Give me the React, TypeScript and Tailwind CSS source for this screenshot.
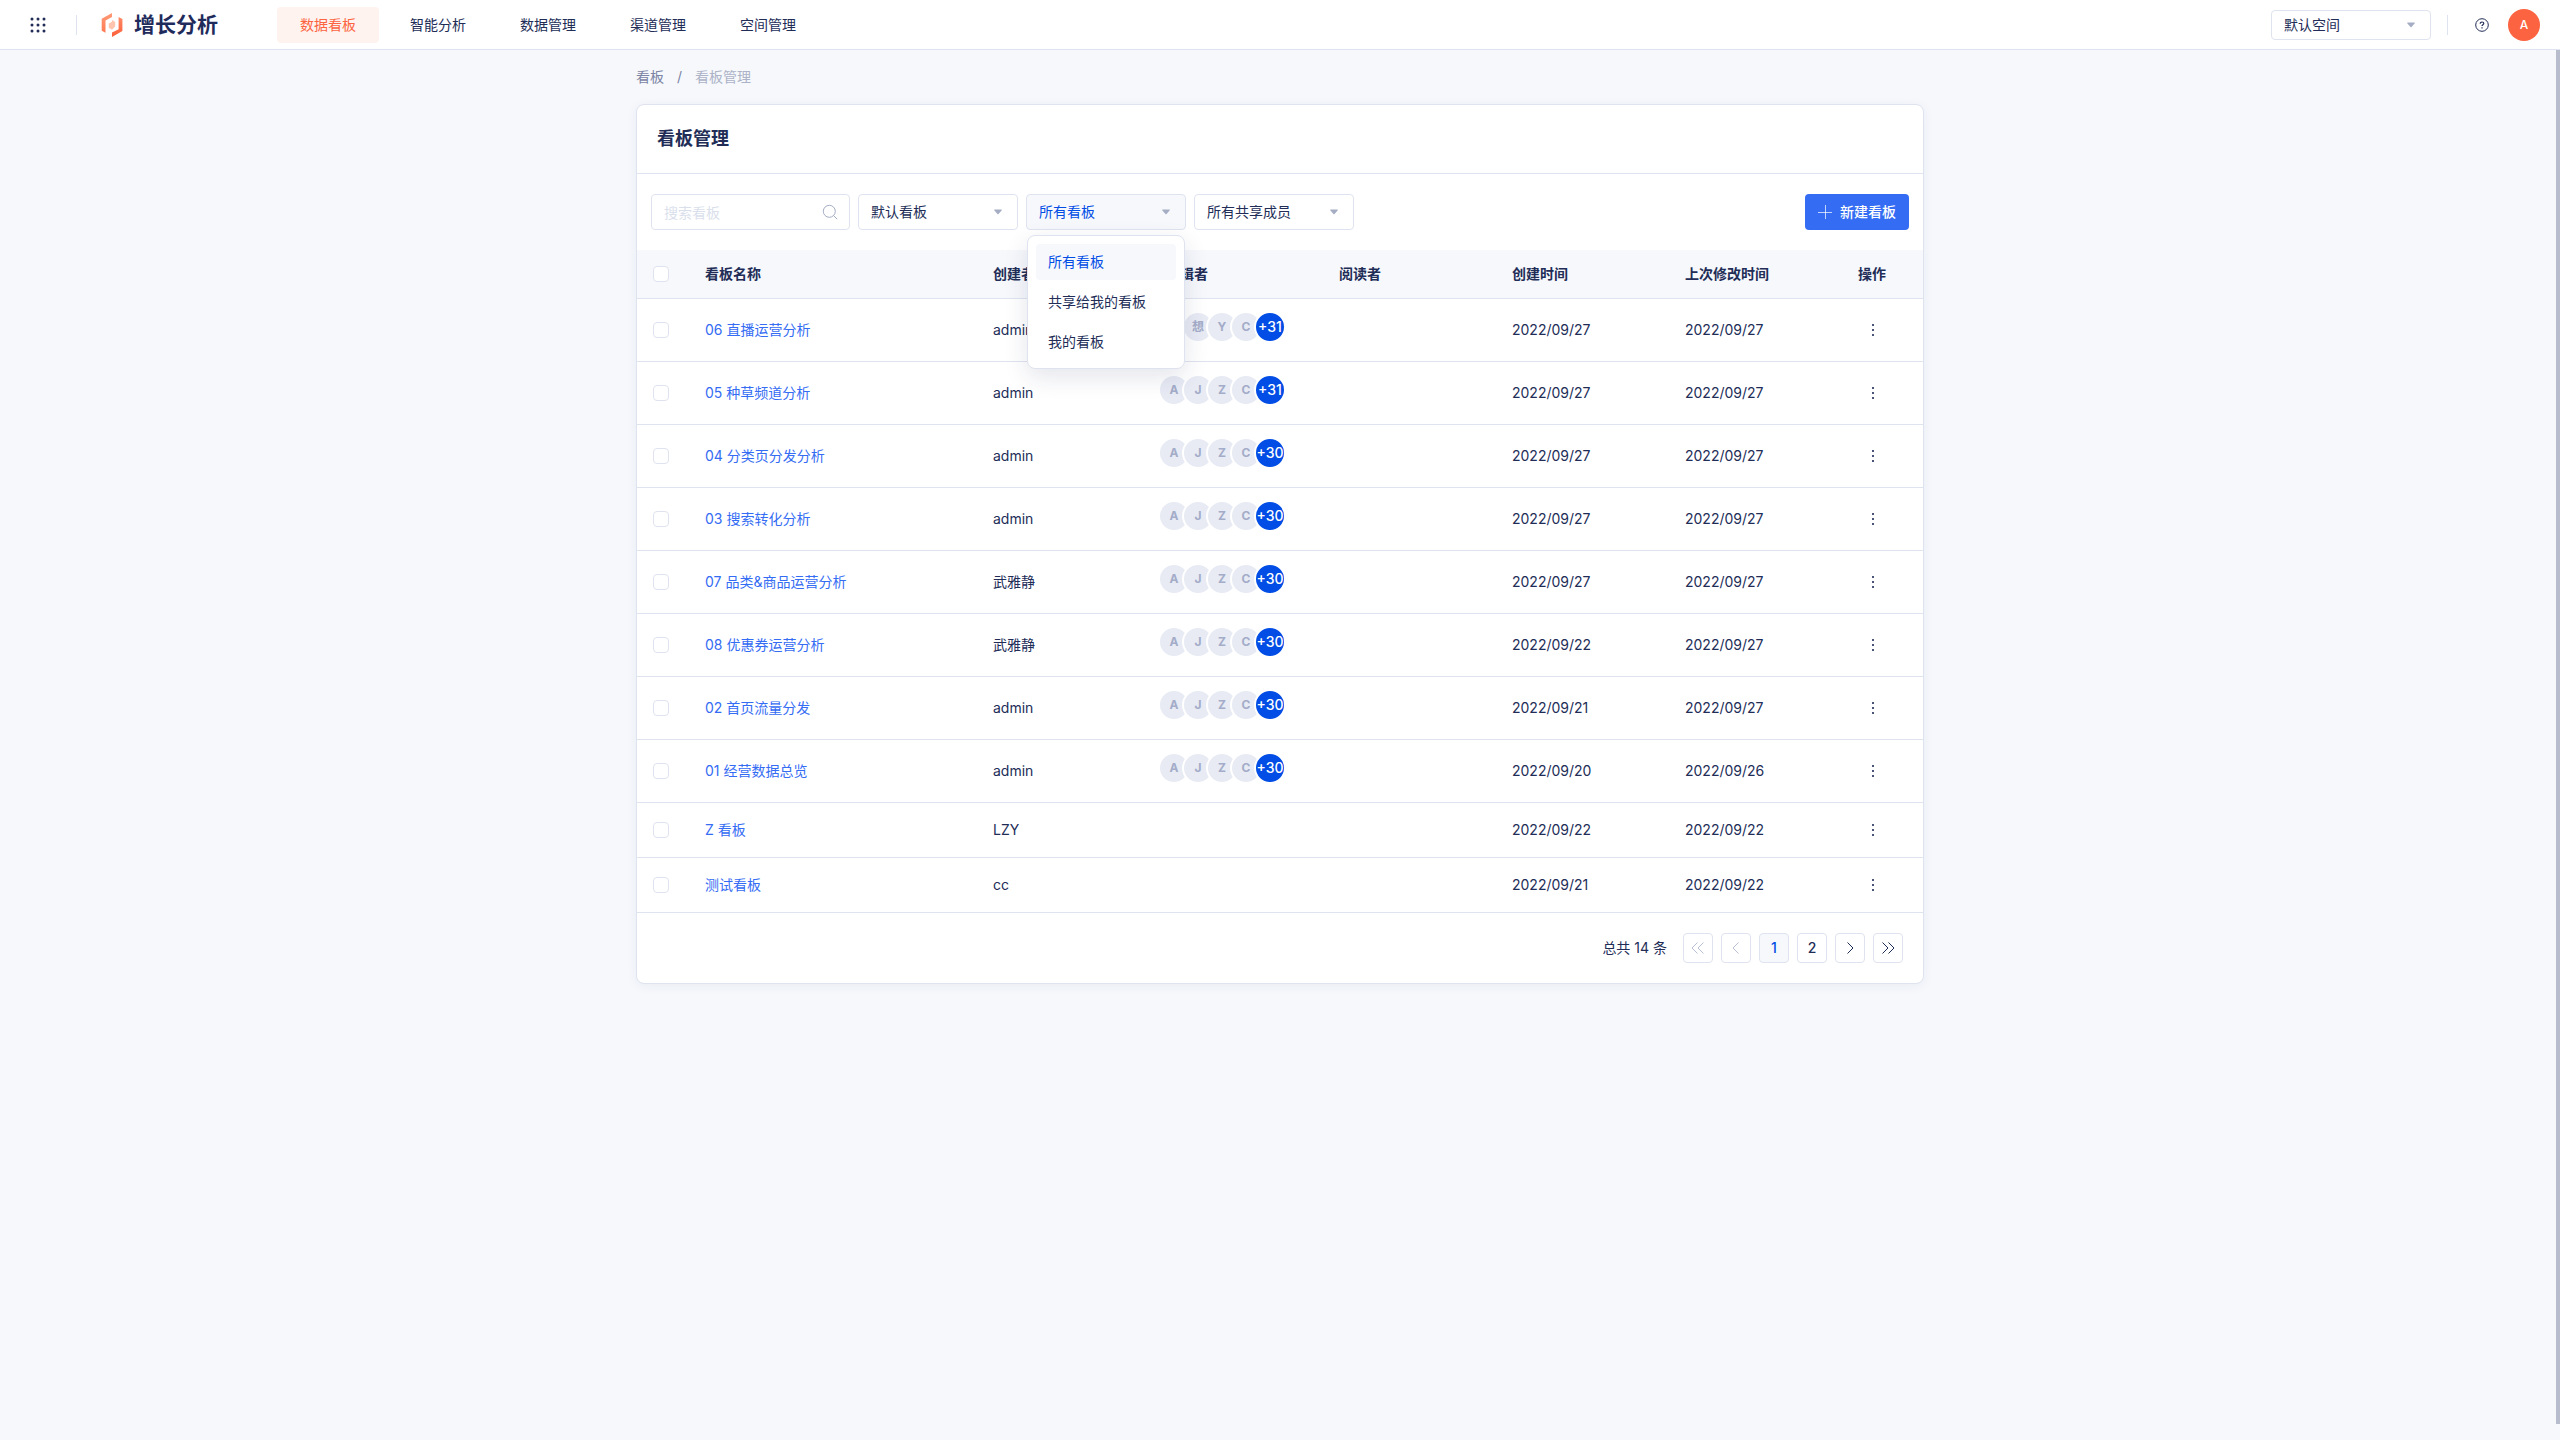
import clsx from 'clsx';
import { useState } from 'react';

type Board = {
  name: string;
  creator: string;
  editors?: string[];
  more?: number;
  createdAt: string;
  updatedAt: string;
};

const navItems = ['数据看板', '智能分析', '数据管理', '渠道管理', '空间管理'];

const scopeOptions = ['所有看板', '共享给我的看板', '我的看板'];

const editors = ['A', 'J', 'Z', 'C'];

const boards: Board[] = [
  {
    name: '06 直播运营分析',
    creator: 'admin',
    editors: ['A', '想', 'Y', 'C'],
    more: 31,
    createdAt: '2022/09/27',
    updatedAt: '2022/09/27',
  },
  {
    name: '05 种草频道分析',
    creator: 'admin',
    editors,
    more: 31,
    createdAt: '2022/09/27',
    updatedAt: '2022/09/27',
  },
  {
    name: '04 分类页分发分析',
    creator: 'admin',
    editors,
    more: 30,
    createdAt: '2022/09/27',
    updatedAt: '2022/09/27',
  },
  {
    name: '03 搜索转化分析',
    creator: 'admin',
    editors,
    more: 30,
    createdAt: '2022/09/27',
    updatedAt: '2022/09/27',
  },
  {
    name: '07 品类&商品运营分析',
    creator: '武雅静',
    editors,
    more: 30,
    createdAt: '2022/09/27',
    updatedAt: '2022/09/27',
  },
  {
    name: '08 优惠券运营分析',
    creator: '武雅静',
    editors,
    more: 30,
    createdAt: '2022/09/22',
    updatedAt: '2022/09/27',
  },
  {
    name: '02 首页流量分发',
    creator: 'admin',
    editors,
    more: 30,
    createdAt: '2022/09/21',
    updatedAt: '2022/09/27',
  },
  {
    name: '01 经营数据总览',
    creator: 'admin',
    editors,
    more: 30,
    createdAt: '2022/09/20',
    updatedAt: '2022/09/26',
  },
  {
    name: 'Z 看板',
    creator: 'LZY',
    createdAt: '2022/09/22',
    updatedAt: '2022/09/22',
  },
  {
    name: '测试看板',
    creator: 'cc',
    createdAt: '2022/09/21',
    updatedAt: '2022/09/22',
  },
];

function Logo() {
  return (
    <svg width="22" height="24" viewBox="0 0 22 24" aria-hidden="true">
      <defs>
        <linearGradient id="logo-left" x1="0" y1="0" x2="0" y2="1">
          <stop offset="0" stopColor="#ff9a76" />
          <stop offset="1" stopColor="#fd7a52" />
        </linearGradient>
        <linearGradient id="logo-right" x1="0" y1="0" x2="0" y2="1">
          <stop offset="0" stopColor="#fe8a66" />
          <stop offset="1" stopColor="#fb5f39" />
        </linearGradient>
      </defs>
      <path d="M11 0v4L4.5 7.6v12.2L.7 17.8V5.8z" fill="url(#logo-left)" />
      <path
        d="M11 24v-4.4l6.6-3.4V4l3.8 2.1v12z"
        fill="url(#logo-right)"
      />
      <path d="M11 7l3.2 2v4.4L11 16.8l-3.2-2v-4.3L11 8.8z" fill="#ffc4ae" />
    </svg>
  );
}

function Caret() {
  return (
    <svg
      className="pointer-events-none absolute inset-y-0 right-4 my-auto"
      width="8"
      height="6"
      viewBox="0 0 8 6"
      aria-hidden="true">
      <path
        d="M.8.5h6.4c.5 0 .8.5.4.9L4.5 5c-.3.3-.7.3-1 0L.4 1.4C0 1 .3.5.8.5z"
        fill="#a5adc4"
      />
    </svg>
  );
}

function FilterSelect({
  label,
  options,
  open = false,
  compact = false,
}: {
  label: string;
  options: string[];
  open?: boolean;
  compact?: boolean;
}) {
  return (
    <div className="relative w-40">
      <select
        aria-label={label}
        className={clsx(
          'w-full appearance-none rounded-sm border border-[#dfe3ef] pl-3 pr-8 text-sm outline-none',
          compact ? 'h-[30px]' : 'h-9',
          open ? 'bg-[#f6f8fc] text-[#024de5]' : 'bg-white',
        )}>
        {options.map((option) => (
          <option key={option}>{option}</option>
        ))}
      </select>
      <Caret />
    </div>
  );
}

function Checkbox({ label }: { label: string }) {
  return (
    <input
      type="checkbox"
      aria-label={label}
      className="block size-4 appearance-none rounded-sm border border-[#dfe3ef] bg-white checked:bg-[#346cf3]"
    />
  );
}

function EditorList({ names, more }: { names: string[]; more?: number }) {
  return (
    <div className="-ml-2 flex">
      {names.map((name, i) => (
        <span
          key={i}
          className="-mr-2 flex size-8 shrink-0 items-center justify-center rounded-full border-2 border-white bg-[#e8ebf4] text-xs font-bold text-[#a3acc8]">
          {name}
        </span>
      ))}
      <span className="flex size-8 shrink-0 items-center justify-center rounded-full border-2 border-white bg-[#024de5] text-sm font-medium text-white">
        +{more}
      </span>
    </div>
  );
}

function PageButton({
  label,
  active = false,
  disabled = false,
  children,
}: {
  label: string;
  active?: boolean;
  disabled?: boolean;
  children: React.ReactNode;
}) {
  return (
    <button
      aria-label={label}
      disabled={disabled}
      className={clsx(
        'flex size-[30px] items-center justify-center rounded-sm border border-[#dfe3ef] text-sm font-medium',
        active && 'bg-[#f6f8fc] text-[#024de5]',
        disabled && 'text-[#b9c0d4]',
      )}>
      {children}
    </button>
  );
}

function Arrow({ d }: { d: string }) {
  return (
    <svg
      width="14"
      height="14"
      viewBox="0 0 14 14"
      fill="none"
      stroke="currentColor"
      aria-hidden="true">
      <path d={d} />
    </svg>
  );
}

function Header() {
  return (
    <header className="flex h-[50px] items-center border-b border-[#dfe3ef] bg-white pl-[27px] pr-5">
      <button
        aria-label="应用列表"
        className="flex size-[22px] items-center justify-center">
        <svg width="16" height="16" viewBox="0 0 16 16" fill="#222d57">
          {[2, 8, 14].map((y) =>
            [2, 8, 14].map((x) => (
              <circle key={`${x}-${y}`} cx={x} cy={y} r="1.5" />
            )),
          )}
        </svg>
      </button>
      <div className="ml-[27px] h-5 w-px bg-[#dfe3ef]" />
      <a href="#" className="ml-6 flex items-center gap-[11px]">
        <Logo />
        <span className="text-[21px] font-bold text-[#1f2b5b]">增长分析</span>
      </a>

      <nav className="ml-[59px] flex gap-2">
        {navItems.map((item, i) => (
          <a
            key={item}
            href="#"
            className={clsx(
              'flex h-9 items-center rounded-sm px-[23px] text-sm',
              i === 0 && 'bg-[#fff3f0] text-[#fc6340]',
            )}>
            {item}
          </a>
        ))}
      </nav>

      <div className="ml-auto flex items-center">
        <FilterSelect label="空间" options={['默认空间']} compact />
        <div className="ml-4 h-5 w-px bg-[#dfe3ef]" />
        <button aria-label="帮助" className="ml-[27px]">
          <svg
            width="14"
            height="14"
            viewBox="0 0 14 14"
            fill="none"
            stroke="#222d57">
            <circle cx="7" cy="7" r="6.3" />
            <path
              d="M5.2 5.7c0-1 .8-1.7 1.8-1.7s1.8.7 1.8 1.6c0 1.2-1.8 1.2-1.8 2.5M7 9.2v1.2"
              strokeWidth="1.2"
            />
          </svg>
        </button>
        <button
          aria-label="账户"
          className="ml-[19px] size-8 rounded-full bg-[#fc6340] text-xs font-medium text-white">
          A
        </button>
      </div>
    </header>
  );
}

export default function App() {
  const [scope, setScope] = useState(scopeOptions[0]);

  return (
    <div className="relative min-h-screen bg-[#f6f8fc] font-['Inter','Noto_Sans_CJK_SC',sans-serif] text-[#222d57]">
      <Header />
      {/* Scrollbar thumb */}
      <div className="absolute bottom-4 right-0 top-[50px] w-1 bg-[#b8bdce]" />

      <main className="mx-auto w-full max-w-[1288px]">
        <nav
          aria-label="breadcrumb"
          className="flex h-[54px] items-center gap-[13px] text-sm text-[#7b84a5]">
          <a href="#">看板</a>
          <span>/</span>
          <span className="text-[#acb3c7]">看板管理</span>
        </nav>

        <section className="rounded-lg border border-[#dfe3ef] bg-white shadow-[0_2px_12px_rgba(34,45,87,0.06)]">
          <h1 className="flex h-[69px] items-center border-b border-[#dfe3ef] px-5 text-lg font-bold">
            看板管理
          </h1>

          {/* Filters */}
          <div className="flex items-center gap-2 px-3.5 py-5">
            <div className="relative w-[199px]">
              <input
                type="text"
                aria-label="搜索看板"
                placeholder="搜索看板"
                className="block h-9 w-full rounded-sm border border-[#dfe3ef] pl-3 pr-9 text-sm outline-none placeholder:text-[#dadfec]"
              />
              <svg
                className="pointer-events-none absolute inset-y-0 right-3 my-auto"
                width="16"
                height="16"
                viewBox="0 0 16 16"
                fill="none"
                stroke="#a5adc4"
                aria-hidden="true">
                <circle cx="7.3" cy="7.3" r="6" />
                <path d="M11.5 11.5l3.7 3.7" />
              </svg>
            </div>
            <FilterSelect label="看板分类" options={['默认看板']} />
            <div className="relative">
              <FilterSelect label="看板范围" options={scopeOptions} open />
              <ul
                role="listbox"
                aria-label="看板范围"
                className="absolute inset-x-px top-full z-10 mt-[5px] flex flex-col gap-1 rounded-lg border border-[#dfe3ef] bg-white p-2 shadow-[0_8px_24px_rgba(34,45,87,0.12)]">
                {scopeOptions.map((option) => (
                  <li
                    key={option}
                    role="option"
                    aria-selected={option === scope}
                    onClick={() => setScope(option)}
                    className={clsx(
                      'flex h-9 cursor-pointer items-center rounded-sm px-3 text-sm',
                      option === scope && 'bg-[#f6f8fc] text-[#024de5]',
                    )}>
                    {option}
                  </li>
                ))}
              </ul>
            </div>
            <FilterSelect label="共享成员" options={['所有共享成员']} />
            <button className="ml-auto flex h-9 items-center gap-2 rounded-sm bg-[#346cf3] px-[13px] text-sm font-medium text-white">
              <svg
                width="14"
                height="14"
                viewBox="0 0 14 14"
                stroke="#fff"
                aria-hidden="true">
                <path d="M0 7.5h14M7.5 0v14" strokeOpacity=".7" />
              </svg>
              新建看板
            </button>
          </div>

          <table className="w-full table-fixed border-collapse text-left text-sm">
            <thead>
              <tr className="h-12 border-b border-[#dfe3ef] bg-[#f6f8fc]">
                <th className="w-[52px] px-4">
                  <Checkbox label="全选" />
                </th>
                <th className="w-72 px-4 font-bold">看板名称</th>
                <th className="w-[173px] px-4 font-bold">创建者</th>
                <th className="w-[173px] px-4 font-bold">编辑者</th>
                <th className="w-[173px] px-4 font-bold">阅读者</th>
                <th className="w-[173px] px-4 font-bold">创建时间</th>
                <th className="w-[173px] px-4 font-bold">上次修改时间</th>
                <th className="px-4 font-bold">操作</th>
              </tr>
            </thead>
            <tbody>
              {boards.map((board) => (
                <tr
                  key={board.name}
                  className={clsx(
                    'border-b border-[#dfe3ef]',
                    board.editors ? 'h-[63px]' : 'h-[55px]',
                  )}>
                  <td className="px-4">
                    <Checkbox label={board.name} />
                  </td>
                  <td className="px-4">
                    <a href="#" className="text-[#346cf3]">
                      {board.name}
                    </a>
                  </td>
                  <td className="px-4">{board.creator}</td>
                  <td className="px-4 pb-1.5">
                    {board.editors && (
                      <EditorList names={board.editors} more={board.more} />
                    )}
                  </td>
                  <td className="px-4" />
                  <td className="px-4">{board.createdAt}</td>
                  <td className="px-4">{board.updatedAt}</td>
                  <td className="px-4">
                    <button
                      aria-label="更多操作"
                      className="flex h-5 w-[30px] items-center justify-center">
                      <svg width="2" height="12" fill="#4a5478">
                        <path d="M0 0h2v2H0zM0 5h2v2H0zM0 10h2v2H0z" />
                      </svg>
                    </button>
                  </td>
                </tr>
              ))}
            </tbody>
          </table>

          {/* Pagination */}
          <div className="flex items-center justify-end gap-2 px-5 py-5">
            <span className="mr-2 text-sm">总共 14 条</span>
            <PageButton label="第一页" disabled>
              <Arrow d="M6.5 1.5L1 7l5.5 5.5M12.5 1.5L7 7l5.5 5.5" />
            </PageButton>
            <PageButton label="上一页" disabled>
              <Arrow d="M9.5 1.5L4 7l5.5 5.5" />
            </PageButton>
            <PageButton label="第 1 页" active>
              1
            </PageButton>
            <PageButton label="第 2 页">2</PageButton>
            <PageButton label="下一页">
              <Arrow d="M4.5 1.5L10 7l-5.5 5.5" />
            </PageButton>
            <PageButton label="最后一页">
              <Arrow d="M1.5 1.5L7 7l-5.5 5.5M7.5 1.5L13 7l-5.5 5.5" />
            </PageButton>
          </div>
        </section>
      </main>
    </div>
  );
}
